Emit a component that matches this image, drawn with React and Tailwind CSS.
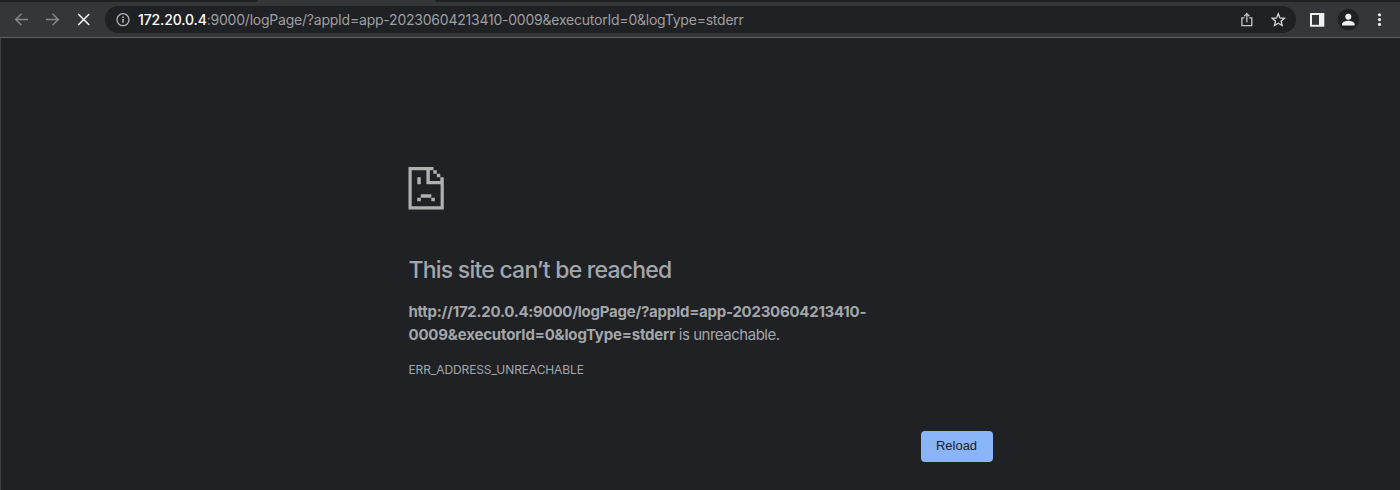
function Toolbar() {
  return (
    <header className="flex h-[38px] shrink-0 flex-col border-b border-[#606164] bg-[#35363a]">
      <div className="flex h-[2px] justify-between">
        <div className="w-[258px] rounded-br-[2px] bg-[#202124]" />
        <div className="w-[965px] rounded-bl-[2px] bg-[#202124]" />
      </div>
      <div className="flex h-[35px] items-center">
        <svg className="ml-3.5 size-4 shrink-0" viewBox="0 0 16 16" fill="none" stroke="#87888b" strokeWidth="1.4">
          <path d="M14 7.500H2M7.500 1.700 1.700 7.500l5.800 5.800" />
        </svg>
        <svg className="ml-[15px] size-4 shrink-0" viewBox="0 0 16 16" fill="none" stroke="#87888b" strokeWidth="1.4">
          <path d="M1 7.500h12M7.500 1.700 13.300 7.500l-5.800 5.800" />
        </svg>
        <svg className="ml-[15px] size-4 shrink-0" viewBox="0 0 16 16" fill="none" stroke="#f1f1f2" strokeWidth="1.7">
          <path d="m2.200 2 11 11M13.200 2l-11 11" />
        </svg>
        <div className="ml-[13px] flex h-[27px] w-[1191px] items-center rounded-full bg-[#202124]">
          <svg className="ml-[11px] size-3.5 shrink-0" viewBox="0 0 14 14" fill="none" stroke="#b0b2b5" strokeWidth="1.3">
            <circle cx="7" cy="6.700" r="6" />
            <path d="M7 6V9.800M7 3.500v1.400" strokeWidth="1.600" />
          </svg>
          <span className="ml-2 whitespace-nowrap text-[14px] text-[#9d9fa2]">
            <span className="font-medium tracking-[-0.12px] text-white">172.20.0.4</span>
            <span className="tracking-[-0.225px]">:9000/logPage/?appId=app-20230604213410-0009&amp;executorId=0&amp;logType=stderr</span>
          </span>
          <svg className="ml-auto size-4 shrink-0" viewBox="0 0 16 16" fill="none" stroke="#c4c6c9" strokeWidth="1.3">
            <path d="M5.500 5.800H2.900v7.900h9.900V5.800H10.200M7.850 10.300V1.600M5.250 4.200 7.850 1.600l2.600 2.600" />
          </svg>
          <svg className="mr-[10px] ml-[15px] size-4 shrink-0" viewBox="0 0 16 16" fill="none" stroke="#d4d6d8" strokeWidth="1.3">
            <path d="m8.300 1.800 1.700 4.100 4.400.4-3.300 2.900 1 4.300-3.800-2.300-3.800 2.300 1-4.300-3.300-2.900 4.400-.4z" />
          </svg>
        </div>
        <svg className="ml-[14px] h-3.5 w-[15px] shrink-0" viewBox="0 0 15 14">
          <path d="M0 0h14.300v13.700H0z" fill="#f1f1f2" />
          <path d="M2 2h7v9.800H2z" fill="#35363a" />
        </svg>
        <svg className="ml-[12px] size-[22px] shrink-0" viewBox="0 0 22 22" fill="#f1f1f2">
          <circle cx="11.300" cy="10.800" r="10.700" fill="#202124" />
          <circle cx="11.300" cy="7.700" r="3" />
          <path d="M5 16.500v-1.300c0-2.300 4.200-3.400 6.300-3.400s6.300 1.100 6.300 3.400v1.300z" />
        </svg>
        <svg className="ml-[13px] size-4 shrink-0" viewBox="0 0 16 16" fill="#e8eaed">
          <circle cx="7.500" cy="2.800" r="1.600" />
          <circle cx="7.500" cy="7.600" r="1.600" />
          <circle cx="7.500" cy="12.400" r="1.600" />
        </svg>
      </div>
    </header>
  );
}

function SadPage() {
  return (
    <svg className="h-[43px] w-9" viewBox="0 0 36 43" fill="#b0b1b1">
      <path d="M.5 0h25v3.300H3.700v36h28.900V17.300H18.400V3.300h3.400v10.700h14V42.500H.5z" />
      <path d="M25.300 3.300h3.500v3.500h-3.500zM28.800 6.800h3.500v3.500h-3.500zM32.300 10.300h3.500V14h-3.500z" />
      <path d="M9.300 10.300h3.500v7H9.300zM12.800 27.300h10.500v3.400H12.800zM9.300 30.700h3.500v3.500H9.300zM23.300 30.700h3.500v3.500h-3.500z" />
    </svg>
  );
}

export default function App() {
  return (
    <div className="flex h-[490px] w-[1400px] flex-col bg-[#202124] font-['Inter','Liberation_Sans',sans-serif]">
      <Toolbar />
      <main className="flex flex-1 flex-col border-l border-[#404144] pt-[129px] pl-[407px] text-[#a3a7ab]">
        <SadPage />
        <h1 className="mt-[44px] ml-[0.5px] text-[23px] leading-8 font-medium tracking-[-0.77px] whitespace-nowrap"><span>This site can’t be reached</span></h1>
        <p className="mt-[14px] ml-[0.5px] text-[15px] leading-[23px] whitespace-nowrap">
          <b className="font-bold tracking-[-0.25px]">http://172.20.0.4:9000/logPage/?appId=app-20230604213410-</b>
          <br />
          <b className="font-bold tracking-[-0.18px]">0009&amp;executorId=0&amp;logType=stderr</b>
          <span className="tracking-[-0.48px]"> is unreachable.</span>
        </p>
        <p className="mt-[15px] ml-[0.5px] text-xs leading-[18px] tracking-[-0.1px]"><span>ERR_ADDRESS_UNREACHABLE</span></p>
        <button className="mt-[52px] ml-[512.5px] h-[31px] w-[72px] rounded-[4px] bg-[#8ab4f8] pb-px font-['Liberation_Sans',Arial,sans-serif] text-[13px] text-[#202124]">
          Reload
        </button>
      </main>
    </div>
  );
}
